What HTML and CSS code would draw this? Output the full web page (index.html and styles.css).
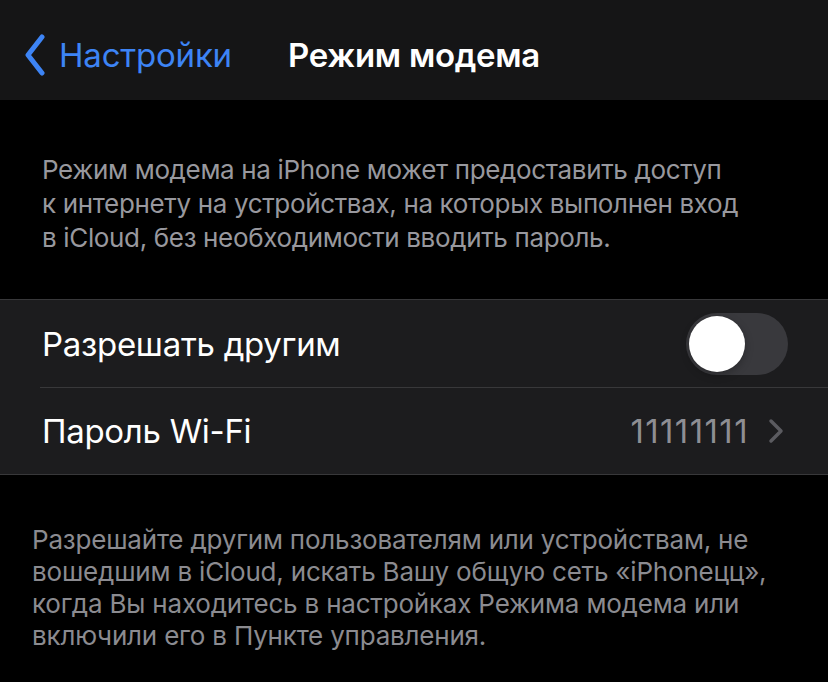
FILE: index.html
```html
<!DOCTYPE html>
<html lang="ru">
<head>
  <meta charset="UTF-8">
  <title>Режим модема</title>
  <link rel="stylesheet" href="styles.css">
</head>
<body>
<!-- Navigation bar -->
<header class="navbar">
  <a class="back" href="#">
    <svg class="back-icon" width="22" height="42" viewBox="0 0 22 42">
      <path d="M18 3 L4 21 L18 39" fill="none" stroke="#3d84f5" stroke-width="5" stroke-linecap="round" stroke-linejoin="round"/>
    </svg>
    <span>Настройки</span>
  </a>
  <h1 class="title">Режим модема</h1>
  <div></div>
</header>

<p class="note top-note">
  Режим модема на iPhone может предоставить доступ<br>
  к интернету на устройствах, на которых выполнен вход<br>
  в iCloud, без необходимости вводить пароль.
</p>

<!-- Settings group -->
<section class="group">
  <div class="row">
    <span class="label">Разрешать другим</span>
    <span class="toggle"><span class="knob"></span></span>
  </div>
  <div class="row">
    <span class="label">Пароль Wi-Fi</span>
    <span class="value">11111111</span>
    <svg class="chevron" width="16" height="26" viewBox="0 0 16 26">
      <path d="M3 3 L13 13 L3 23" fill="none" stroke="#5b5b60" stroke-width="3.5" stroke-linecap="round" stroke-linejoin="round"/>
    </svg>
  </div>
</section>

<p class="note footer-note">
  Разрешайте другим пользователям или устройствам, не<br>
  вошедшим в iCloud, искать Вашу общую сеть «iPhoneцц»,<br>
  когда Вы находитесь в настройках Режима модема или<br>
  включили его в Пункте управления.
</p>
</body>
</html>
```

FILE: styles.css
```css
body {
    margin: 0;
    background: #000;
    color: #fff;
    font-family: Inter, 'Noto Sans', sans-serif;
    width: 828px;
    height: 682px;
    overflow: hidden;
}
.navbar {
    height: 100px;
    background: #151516;
    display: grid;
    grid-template-columns: 1fr auto 1fr;
    align-items: center;
}
.back {
    display: flex;
    align-items: center;
    gap: 13px;
    padding-left: 24px;
    color: #3d84f5;
    text-decoration: none;
    font-size: 33px;
    letter-spacing: -0.2px;
    margin-top: 10px;
}
.title {
    margin: 10px 0 0;
    font-size: 33px;
    font-weight: 600;
    letter-spacing: -0.3px;
}
.note {
    margin: 0;
    font-size: 26px;
    color: #98989e;
    letter-spacing: -0.35px;
}
.top-note {
    padding: 53px 0 0 42px;
    line-height: 34px;
    margin-bottom: 44px;
}
.group {
    background: #1c1c1e;
    border-top: 1px solid #38383a;
    border-bottom: 1px solid #38383a;
    padding-left: 40px;
}
.row {
    height: 87px;
    display: flex;
    align-items: center;
    padding-right: 40px;
    padding-left: 2px;
}
.row + .row {
    height: 86px;
    border-top: 1px solid #38383a;
    padding-right: 44px;
}
.label {
    flex: 1;
    font-size: 33px;
    letter-spacing: -0.3px;
}
.value {
    font-size: 33px;
    color: #8e8e93;
    letter-spacing: 1.4px;
    margin-right: 19px;
}
.toggle {
    width: 102px;
    height: 62px;
    border-radius: 31px;
    background: #39393d;
    display: flex;
    align-items: center;
    padding-left: 3px;
    box-sizing: border-box;
}
.knob {
    width: 56px;
    height: 56px;
    border-radius: 50%;
    background: #fff;
    box-shadow: 0 3px 8px rgba(0,0,0,0.25), 0 0 1px rgba(0,0,0,0.2);
}
.footer-note {
    padding: 49px 0 0 32px;
    line-height: 32px;
    color: #8b8b90;
    letter-spacing: -0.2px;
}
```
